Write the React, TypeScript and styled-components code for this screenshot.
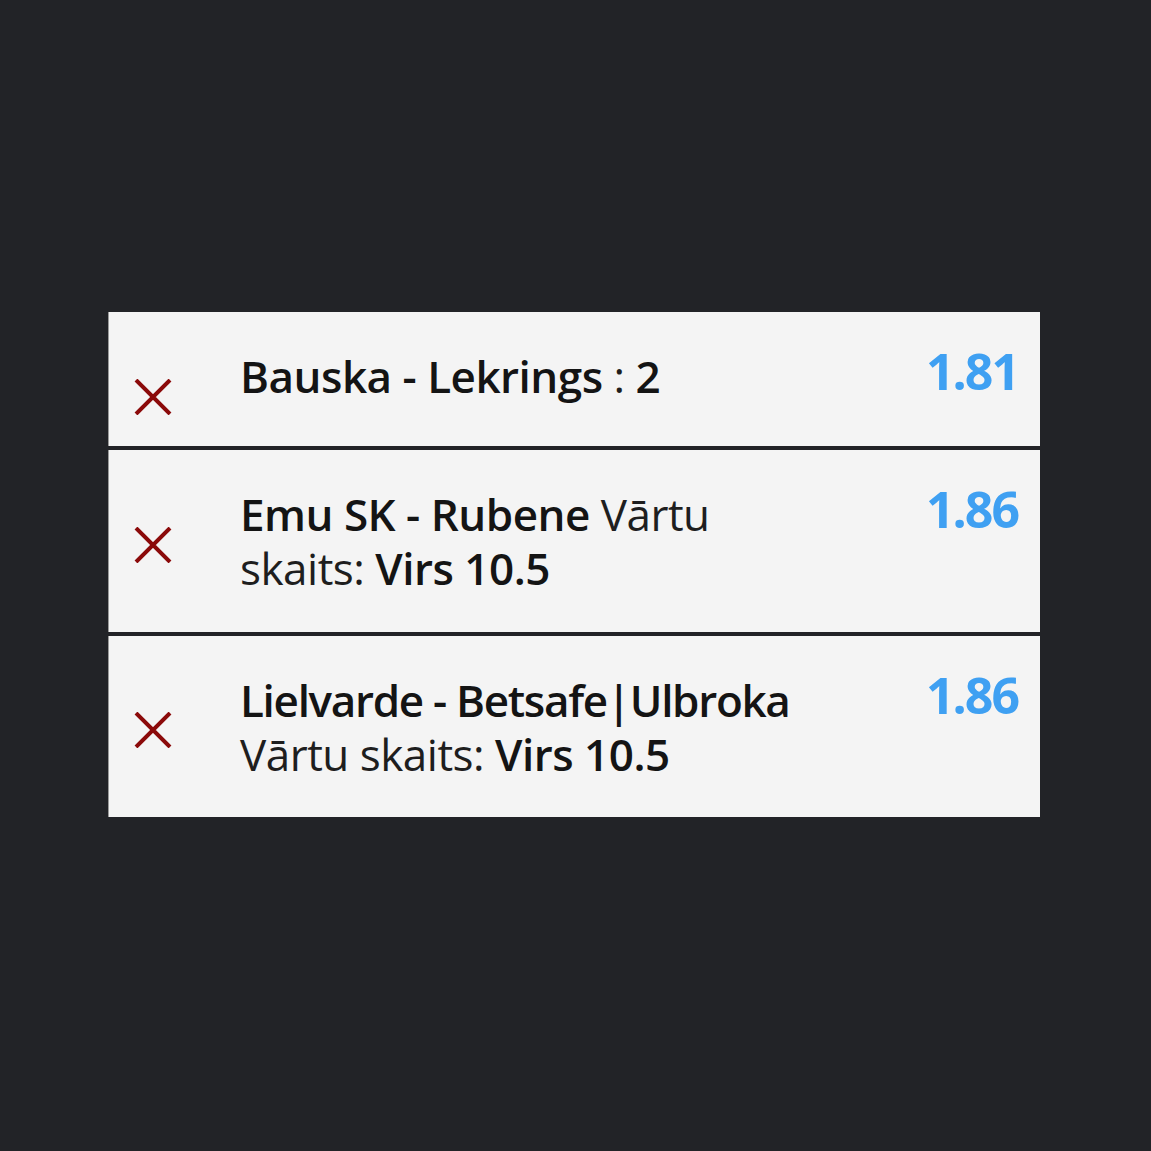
import React from "react";
import styled, { createGlobalStyle } from "styled-components";

const Global = createGlobalStyle`
  html, body { margin: 0; padding: 0; background: #222327; }
  body { font-family: "Open Sans", Lato, sans-serif; }
`;

const Page = styled.div`
  width: 1151px;
  height: 1151px;
  display: flex;
  flex-direction: column;
  padding: 312px 0 0 108px;
  box-sizing: border-box;
`;

const List = styled.div`
  width: 932px;
  display: flex;
  flex-direction: column;
  gap: 4px;
`;

const Row = styled.div<{ $h: number }>`
  height: ${(p) => p.$h}px;
  box-sizing: border-box;
  background: #f4f4f4;
  border-left: 1px solid #9a9a9a;
  display: grid;
  grid-template-columns: 131px 1fr auto;
  align-items: start;
  padding: 0 22px 0 0;
`;

const CloseCell = styled.div<{ $top: number }>`
  display: flex;
  padding-left: 25px;
  padding-top: ${(p) => p.$top}px;
`;

const Text = styled.div`
  padding-top: 37px;
  font-size: 44px;
  line-height: 54px;
  color: #141414;
  letter-spacing: -0.5px;
`;

const B = styled.span`
  font-weight: 600;
`;

const R = styled.span`
  font-weight: 400;
  color: #1e1e1e;
`;

const Tight = styled.span`
  letter-spacing: -1.3px;
`;

const Odds = styled.div`
  padding-top: 32px;
  font-size: 50px;
  line-height: 54px;
  font-weight: 700;
  color: #3fa0f2;
  letter-spacing: -2px;
`;

const Cross = () => (
  <svg width="38" height="36" viewBox="0 0 38 36">
    <path d="M2 1 L36 35 M36 1 L2 35" stroke="#8b0a0a" strokeWidth="4" strokeLinecap="butt" />
  </svg>
);

export default function App() {
  return (
    <Page>
      <Global />
      <List>
        <Row $h={134}>
          <CloseCell $top={67}>
            <Cross />
          </CloseCell>
          <Text>
            <B>Bauska - Lekrings</B> <R>:</R> <B>2</B>
          </Text>
          <Odds>1.81</Odds>
        </Row>
        <Row $h={182}>
          <CloseCell $top={77}>
            <Cross />
          </CloseCell>
          <Text>
            <B>Emu SK - Rubene</B> <R>Vārtu</R>
            <br />
            <R>skaits:</R> <B>Virs 10.5</B>
          </Text>
          <Odds>1.86</Odds>
        </Row>
        <Row $h={181}>
          <CloseCell $top={76}>
            <Cross />
          </CloseCell>
          <Text>
            <B>
              <Tight>Lielvarde - Betsafe|Ulbroka</Tight>
            </B>
            <br />
            <R>Vārtu skaits:</R> <B>Virs 10.5</B>
          </Text>
          <Odds>1.86</Odds>
        </Row>
      </List>
    </Page>
  );
}
